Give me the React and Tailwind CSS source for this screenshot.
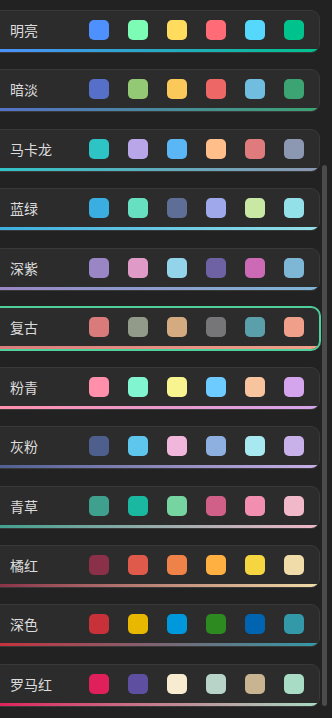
import React from "react";

const palettes = [
  { name: "明亮", colors: ["#4d90fe", "#7dfcb5", "#ffdc5e", "#ff6b76", "#56d8fd", "#00c28c"] },
  { name: "暗淡", colors: ["#5670c9", "#93c875", "#fbc85a", "#ee6767", "#70bde0", "#3ca373"] },
  { name: "马卡龙", colors: ["#2ec4c6", "#b9a6e8", "#5bb6f5", "#ffbe8a", "#e07b7d", "#8c97b2"] },
  { name: "蓝绿", colors: ["#3aaee0", "#66e0c0", "#5e6e96", "#9fa8ea", "#c9e8a4", "#94e0e8"] },
  { name: "深紫", colors: ["#9a86c4", "#e09ac8", "#94d4ea", "#6e62a4", "#cc6ab6", "#7eb6d6"] },
  { name: "复古", colors: ["#d97b7b", "#929a8a", "#d4aa80", "#767678", "#5aa0aa", "#f0a08a"], selected: true },
  { name: "粉青", colors: ["#ff8fab", "#80f5d0", "#f8f490", "#6ecbff", "#f8c49e", "#d4a4ec"] },
  { name: "灰粉", colors: ["#4e5f8e", "#5ec5ec", "#f0b6dc", "#8eb0e0", "#a8e8f0", "#c8b0e8"] },
  { name: "青草", colors: ["#3fa08e", "#1ab8a0", "#76d4a0", "#d06088", "#f28eb0", "#f0b8c8"] },
  { name: "橘红", colors: ["#8a3048", "#e05a4c", "#ef8248", "#ffb040", "#f5d540", "#f0dca8"] },
  { name: "深色", colors: ["#c8303a", "#e8b800", "#0098dc", "#2c8a20", "#0064b0", "#3399a8"] },
  { name: "罗马红", colors: ["#e0205a", "#5f4fa0", "#f8ecd0", "#b8d4c8", "#c8b490", "#a8dcc4"] },
];

function Card({ p }) {
  const first = p.colors[0];
  const last = p.colors[p.colors.length - 1];
  return (
    <div
      className={
        "ml-[-8px] w-[328px] h-[43px] flex flex-col overflow-hidden rounded-[9px] border bg-[#2c2c2c] " +
        (p.selected ? "border-[#4fd19e] ring-1 ring-[#4fd19e]" : "border-[#393939]")
      }
    >
      <div className="flex-1 flex items-center pl-[17px]">
        <div className="w-[79px] text-[14px] leading-[20px] text-[#dcdcdc] font-['Noto_Sans_CJK_SC','Noto_Sans',sans-serif]">
          {p.name}
        </div>
        <div className="flex gap-[19px]">
          {p.colors.map((c, i) => (
            <div key={i} className="w-[20px] h-[20px] rounded-[5px]" style={{ backgroundColor: c }} />
          ))}
        </div>
      </div>
      <div
        className="h-[3px] shrink-0"
        style={{ backgroundImage: `linear-gradient(to right, ${first}, ${last})` }}
      />
    </div>
  );
}

export default function App() {
  return (
    <div className="w-[332px] h-[718px] overflow-hidden bg-[#222222] flex">
      <div className="w-[320px] shrink-0 flex flex-col gap-[16.45px] pt-[10px]">
        {palettes.map((p) => (
          <Card key={p.name} p={p} />
        ))}
      </div>
      <div className="w-[12px] shrink-0 pl-[2px]">
        <div className="mt-[165px] h-[541px] w-[5px] rounded-full bg-[#4b4b4b]" />
      </div>
    </div>
  );
}
